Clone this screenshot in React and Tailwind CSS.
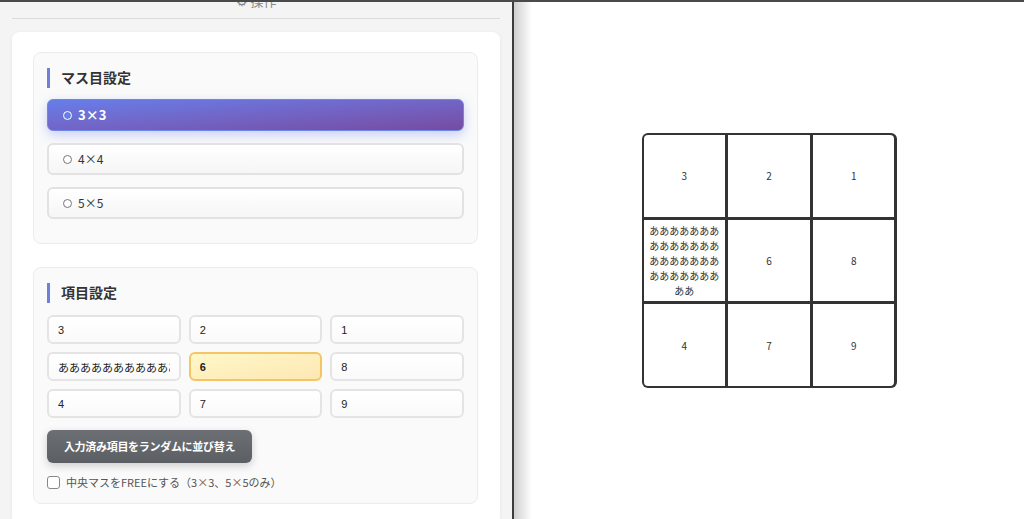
import React from "react";

const items = ["3", "2", "1", "ああああああああああああああああああああああああああああああ", "6", "8", "4", "7", "9"];

function Option({ label, selected }) {
  if (selected) {
    return (
      <div className="flex h-[32px] items-center gap-[6px] rounded-md border border-[#7086e6] bg-gradient-to-br from-[#667eea] to-[#764ba2] pl-[15px] shadow-[0_4px_12px_rgba(102,126,234,0.35)]">
        <span className="h-[9px] w-[9px] rounded-full border-[1.5px] border-white bg-[#667eea]" />
        <span className="text-[13px] font-bold text-white">{label}</span>
      </div>
    );
  }
  return (
    <div className="flex h-[32px] items-center gap-[6px] rounded-md border-2 border-[#e2e2e2] bg-gradient-to-b from-white to-[#f6f6f6] pl-[14px]">
      <span className="h-[9px] w-[9px] rounded-full border border-[#777] bg-white" />
      <span className="text-[12px] text-[#333]">{label}</span>
    </div>
  );
}

function Heading({ children }) {
  return (
    <div className="flex items-center gap-[11px]">
      <span className="h-[20px] w-[3px] bg-[#6f7fdc]" />
      <span className="text-[14px] font-bold text-[#333]">{children}</span>
    </div>
  );
}

export default function App() {
  return (
    <div className="flex h-[519px] w-[1024px] overflow-hidden border-t-2 border-[#4a4a4a] font-['Noto_Sans_CJK_JP',sans-serif]">
      <div className="w-[512px] shrink-0 overflow-hidden bg-[#f4f4f4] px-3">
        <div className="flex h-[17px] justify-center border-b border-[#dcdcdc]">
          <div className="-mt-[9px] text-[13px] leading-[16px] text-[#888]">⚙ 操作</div>
        </div>
        <div className="mt-[13px] rounded-lg bg-white pl-[21px] pr-[22px] pt-[20px] shadow-[0_1px_4px_rgba(0,0,0,0.06)]">
          <div className="rounded-lg border border-[#ececec] bg-[#fafafa] px-[13px] pb-[24px] pt-[14px]">
            <Heading>マス目設定</Heading>
            <div className="mt-[11px] flex flex-col gap-[12px]">
              <Option label="3×3" selected />
              <Option label="4×4" />
              <Option label="5×5" />
            </div>
          </div>
          <div className="mt-[23px] rounded-lg border border-[#ececec] bg-[#fafafa] px-[13px] pb-[12px] pt-[14px]">
            <Heading>項目設定</Heading>
            <div className="mt-[12px] grid grid-cols-3 gap-x-2 gap-y-2">
              {items.map((v, i) =>
                i === 4 ? (
                  <input
                    key={i}
                    readOnly
                    value={v}
                    className="h-[29px] w-full min-w-0 rounded-md border-2 border-[#f3c566] bg-gradient-to-br from-[#fff8c8] to-[#fde7b3] px-[9px] font-['Liberation_Sans','Noto_Sans_CJK_JP',sans-serif] text-[11px] font-bold text-[#222] outline-none"
                  />
                ) : (
                  <input
                    key={i}
                    readOnly
                    value={v}
                    className="h-[29px] w-full min-w-0 rounded-md border-2 border-[#e4e4e4] bg-gradient-to-b from-white to-[#fafafa] px-[9px] font-['Liberation_Sans','Noto_Sans_CJK_JP',sans-serif] text-[11px] text-[#222] outline-none"
                  />
                )
              )}
            </div>
            <button className="mt-[12px] h-[33px] w-[205px] rounded-md bg-gradient-to-b from-[#6c7075] to-[#5b5f64] text-[11px] font-bold tracking-[-0.3px] text-white shadow-[0_3px_8px_rgba(0,0,0,0.18)]">
              入力済み項目をランダムに並び替え
            </button>
            <label className="mt-[11px] flex items-center gap-[6px]">
              <span className="h-[13px] w-[13px] rounded-[3px] border border-[#888] bg-white" />
              <span className="text-[11px] text-[#555]">中央マスをFREEにする（3×3、5×5のみ）</span>
            </label>
          </div>
          <div className="h-[20px]" />
        </div>
      </div>
      <div className="w-[2px] shrink-0 bg-[#3c3c3c]" />
      <div className="relative flex flex-1 items-center justify-center bg-white">
        <div className="absolute inset-y-0 left-0 w-[18px] bg-gradient-to-r from-[#cfcfcf] to-transparent" />
        <div className="grid h-[255px] w-[255px] grid-cols-3 grid-rows-3 gap-[3px] rounded-md bg-[#333] p-[2px]">
          {items.map((v, i) => {
            const corner =
              i === 0 ? "rounded-tl-[4px]" : i === 2 ? "rounded-tr-[4px]" : i === 6 ? "rounded-bl-[4px]" : i === 8 ? "rounded-br-[4px]" : "";
            return (
              <div
                key={i}
                className={`flex items-center justify-center bg-white px-[5px] text-center text-[10px] leading-[15px] break-all text-[#333] ${corner}`}
              >
                {v}
              </div>
            );
          })}
        </div>
      </div>
    </div>
  );
}
